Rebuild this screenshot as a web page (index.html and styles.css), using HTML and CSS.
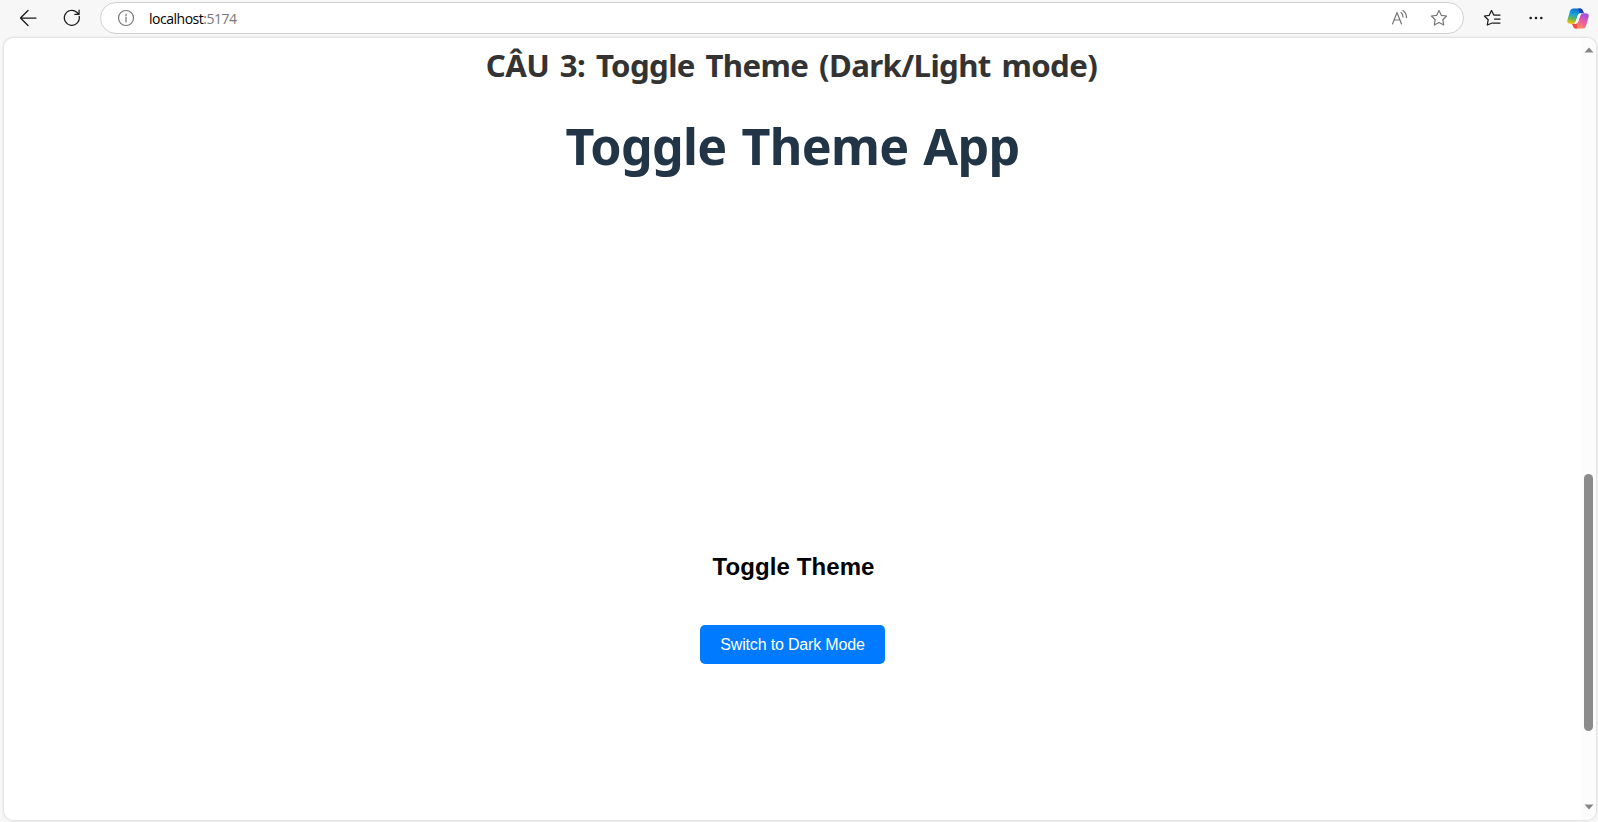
FILE: index.html
```html
<!DOCTYPE html>
<html lang="vi">
<head>
<meta charset="utf-8">
<title>Toggle Theme</title>
<link rel="stylesheet" href="styles.css">
</head>
<body>
<header class="toolbar">
  <svg class="icon back" width="18" height="18" viewBox="0 0 18 18"><path d="M17 9H1.5M9 1.5 1.5 9 9 16.5"/></svg>
  <svg class="icon reload" width="18" height="18" viewBox="0 0 18 18"><path d="M16.2 7.4A7.5 7.5 0 1 1 13.8 3.2L16 5.2M16.1 1V5.3H11.8"/></svg>
  <div class="address">
    <svg class="icon muted" width="18" height="18" viewBox="0 0 18 18"><circle cx="9" cy="9" r="7.5"/><path d="M9 8V13M9 5V6.4"/></svg>
    <span class="url">localhost<span class="port">:5174</span></span>
    <svg class="icon muted read" width="18" height="18" viewBox="0 0 18 18"><path d="M1.5 15 6 3.5 10.5 15M3.1 11H8.9M10 3.5Q12 5 12 8M12 1.5Q15.5 4 15.5 8.5"/></svg>
    <svg class="icon muted" width="18" height="18" viewBox="0 0 18 18"><path d="M9 1.5 11.3 6.3 16.6 7 12.8 10.7 13.7 16 9 13.5 4.3 16 5.2 10.7 1.4 7 6.7 6.3Z"/></svg>
  </div>
  <svg class="icon favorites" width="18" height="18" viewBox="0 0 18 18"><path d="M9.2 14 4.3 16 5.2 10.7 1.4 7 6.2 6.3 8.5 1.5 10.8 6H17M11.5 10H17M10 14H17"/></svg>
  <svg class="more" width="14" height="4" viewBox="0 0 14 4"><circle cx="1.7" cy="2" r="1.3"/><circle cx="7" cy="2" r="1.3"/><circle cx="12.3" cy="2" r="1.3"/></svg>
  <svg class="copilot" width="22" height="21" viewBox="0 0 22 21">
    <defs>
      <linearGradient id="cool" x1=".6" y1="0" x2=".4" y2="1"><stop offset="0" stop-color="#0b68cf"/><stop offset=".4" stop-color="#1aa4dc"/><stop offset=".7" stop-color="#62b75a"/><stop offset="1" stop-color="#f2c300"/></linearGradient>
      <linearGradient id="warm" x1=".8" y1="0" x2=".2" y2="1"><stop offset="0" stop-color="#9a4eea"/><stop offset=".5" stop-color="#ec5ba0"/><stop offset="1" stop-color="#ff9a4a"/></linearGradient>
    </defs>
    <path fill="url(#cool)" d="M6 .5H13.5Q15.3.5 16 3L16.8 5.2H14Q11.6 5.2 10.8 7.6L8.8 13.6Q8 15.8 5.8 15.8H3.5Q-.5 15.8.4 12L3 3Q3.8.5 6 .5Z"/>
    <path fill="#173fb0" d="M11.5.5H13.5Q15.3.5 16 3L16.8 5.2H14Q13 5.2 12.3 5.6Z"/>
    <path fill="url(#warm)" d="M16 20.5H8.5Q6.7 20.5 6 18L5.2 15.8H8Q10.4 15.8 11.2 13.4L13.2 7.4Q14 5.2 16.2 5.2H18.5Q22.5 5.2 21.6 9L19 18Q18.2 20.5 16 20.5Z"/>
    <path fill="#f04a48" d="M10.5 20.5H8.5Q6.7 20.5 6 18L5.2 15.8H8Q9 15.8 9.7 15.4Z"/>
    <path fill="#fff" d="M14 5.2H16.2Q14 5.2 13.2 7.4L11.2 13.4Q10.4 15.8 8 15.8H5.8Q8 15.8 8.8 13.6L10.8 7.6Q11.6 5.2 14 5.2Z"/>
  </svg>
</header>
<div class="viewport">
  <main class="page">
    <h2 class="section-title">CÂU 3: Toggle Theme (Dark/Light mode)</h2>
    <h1 class="app-title">Toggle Theme App</h1>
    <section class="theme-panel">
      <h2 class="panel-title">Toggle Theme</h2>
      <button class="switch">Switch to Dark Mode</button>
    </section>
  </main>
  <div class="scrollbar">
    <svg width="10" height="6" viewBox="0 0 10 6"><path d="M.5 5.5 5 .5 9.5 5.5Z"/></svg>
    <div class="thumb"></div>
    <svg class="down" width="10" height="6" viewBox="0 0 10 6"><path d="M.5.5 5 5.5 9.5.5Z"/></svg>
  </div>
</div>
</body>
</html>
```
FILE: styles.css
```css
* { box-sizing: border-box; }
body { margin: 0; height: 822px; overflow: hidden; background: #f7f7f7; display: flex; flex-direction: column; }
svg { display: block; flex: none; }
.toolbar { height: 36px; flex: none; display: flex; align-items: center; padding-left: 19px; }
.icon { fill: none; stroke: #1b1b1b; stroke-width: 1.25; stroke-linejoin: round; stroke-linecap: round; }
.reload { margin-left: 26px; }
.muted { stroke: #767676; stroke-width: 1.2; }
.address { width: 1364px; height: 32px; margin-left: 19px; padding: 0 15px 0 16px; background: #fff; border: 1px solid #d0d0d0; border-radius: 16px; display: flex; align-items: center; }
.url { margin-left: 14px; padding-top: 1px; font: 14px/20px "Open Sans", "Noto Sans", sans-serif; letter-spacing: -.48px; color: #000; }
.port { color: #767676; }
.read { margin-left: auto; margin-right: 21px; }
.favorites { margin-left: 19px; }
.more { margin-left: 28px; fill: #1b1b1b; }
.copilot { margin-left: 24px; }
.viewport { height: 782px; margin: 2px 2px 0 4px; flex: none; display: flex; background: #fff; border-radius: 9px; box-shadow: 0 0 2px 1px #dedede; overflow: hidden; }
.page { flex: 1; display: flex; flex-direction: column; align-items: center; }
h1, h2 { margin: 0; white-space: nowrap; }
.section-title { margin: 5px 2px 0 0; font: bold 31.2px/45px "Noto Sans", sans-serif; letter-spacing: -.62px; word-spacing: 3.2px; color: #333; }
.app-title { margin-top: 25px; font: bold 50.2px/66px "Noto Sans", sans-serif; letter-spacing: -.68px; word-spacing: 2.5px; color: #213547; }
.theme-panel { margin-top: 372px; display: flex; flex-direction: column; align-items: center; }
.panel-title { margin-left: 2px; font: bold 24px/32px "Liberation Sans", Arial, sans-serif; color: #000; letter-spacing: .1px; }
.switch { width: 185px; height: 39px; margin-top: 42px; padding: 0; border: 0; border-radius: 5px; background: #007bff; color: #fff; font: 16px/20px "Liberation Sans", Arial, sans-serif; letter-spacing: -.17px; white-space: nowrap; }
.scrollbar { width: 15px; background: #fcfcfc; display: flex; flex-direction: column; align-items: center; padding: 9px 0 10px; }
.scrollbar svg { fill: #858585; }
.thumb { width: 9px; height: 257px; margin-top: 421px; border-radius: 5px; background: #8b8b8b; }
.down { margin-top: auto; }
```
